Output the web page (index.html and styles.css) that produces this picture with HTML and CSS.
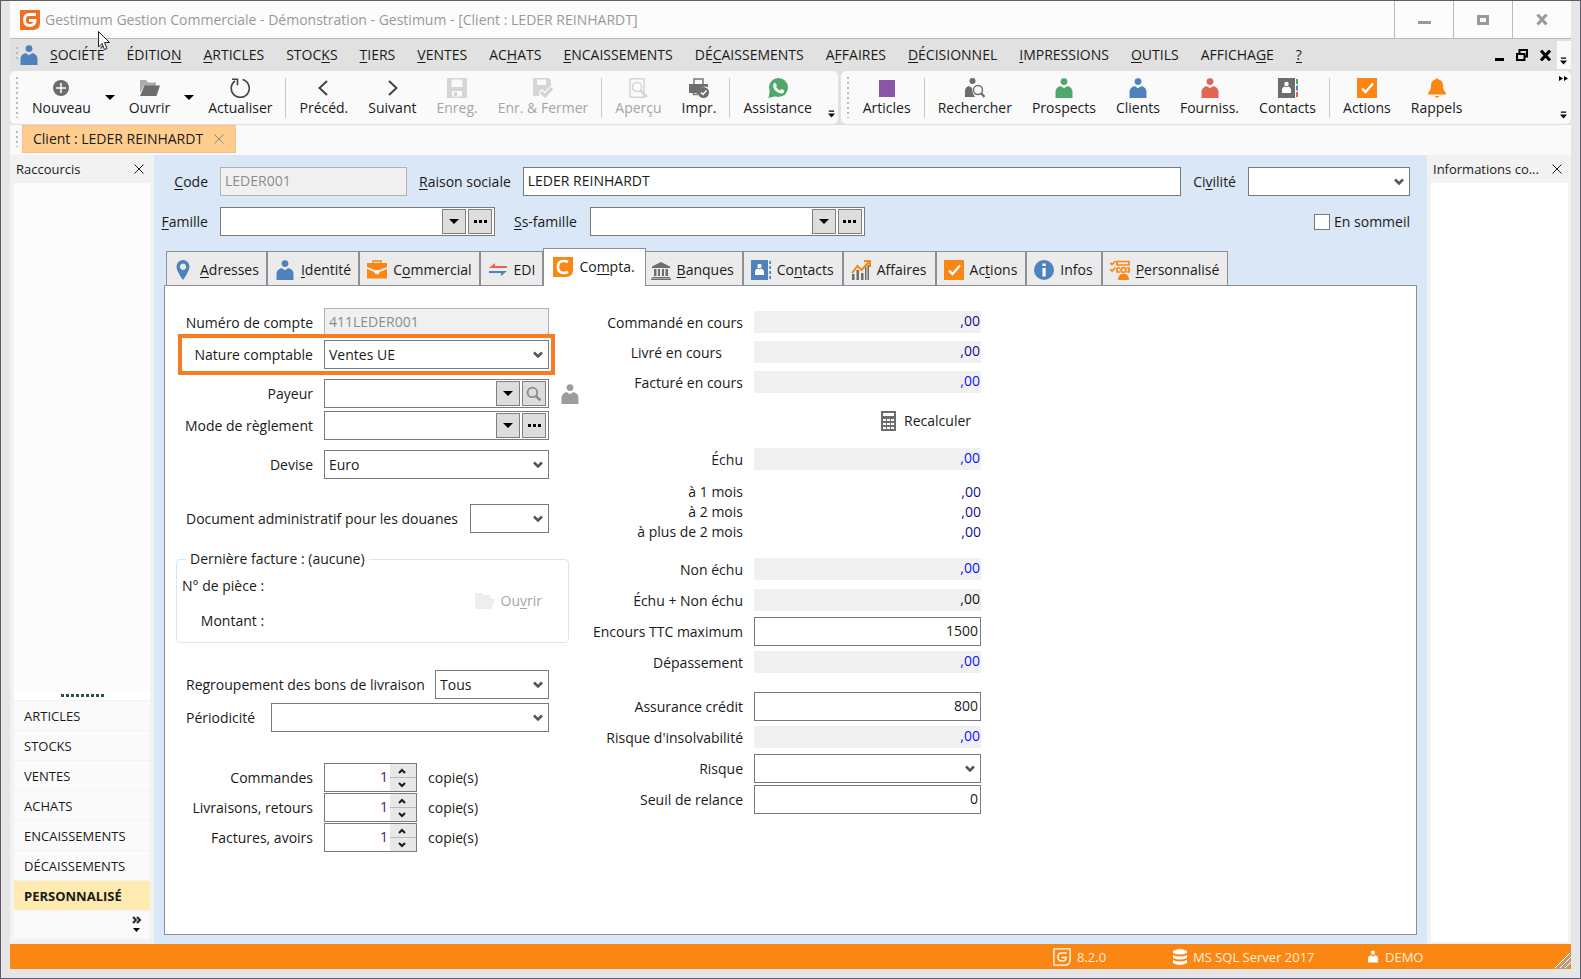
FILE: index.html
```
<!DOCTYPE html>
<html lang="fr">
<head>
  <meta charset="UTF-8">
  <title>Gestimum Gestion Commerciale</title>
  <link rel="stylesheet" href="styles.css">
</head>
<body>

<svg class="sprite" aria-hidden="true">
  <symbol id="i-person" viewBox="0 0 20 20"><circle cx="10" cy="3.6" r="3.4"/><path d="M1.5 20v-6q0-4.500 5-6l3.500 2.200L13.500 8q5 1.500 5 6v6z"/></symbol>
  <symbol id="i-check" viewBox="0 0 20 20"><path fill="#fa8614" d="M0 0h20v20H0z"/><path fill="none" stroke="#fff" stroke-width="2.400" d="M5 10.500l3.500 3.500L16 5.500"/></symbol>
  <symbol id="i-folder" viewBox="0 0 20 20"><path opacity=".55" d="M0 15V2h6l2 2.500h8V8H4z"/><path d="M4.500 7.500H20L16.500 18H0z"/></symbol>
  <symbol id="i-save" viewBox="0 0 20 20"><path fill-rule="evenodd" d="M0 0h20v20H0zM4.500 1.500V9h11V1.500zM5 13v5.500h10V13z"/><path d="M7 14h3v4H7z"/></symbol>
  <symbol id="i-glass" viewBox="0 0 20 20"><circle cx="8" cy="8" r="6" fill="none" stroke="currentColor" stroke-width="2.200"/><path fill="none" stroke="currentColor" stroke-width="3" d="M12 12l6 6"/></symbol>
  <symbol id="i-x" viewBox="0 0 10 10"><path fill="none" stroke="currentColor" d="M.5.5l9 9M9.500.5l-9 9"/></symbol>
  <symbol id="i-more" viewBox="0 0 8 8"><path d="M1 0h6v1.500H1zM0 3.500h8L4 8z"/></symbol>
  <symbol id="i-up" viewBox="0 0 8 6"><path fill="none" stroke="currentColor" stroke-width="2" d="M1 5l3-3 3 3"/></symbol>
  <symbol id="i-down" viewBox="0 0 8 6"><path fill="none" stroke="currentColor" stroke-width="2" d="M1 1l3 3 3-3"/></symbol>
</svg>

<div class="window">
  <header class="titlebar">
    <svg class="logo" viewBox="0 0 20 20"><path fill="#f26f21" d="M0 0h20v13q0 7-7 7H0z"/><path fill="none" stroke="#fff" stroke-width="2.800" d="M16 4.500H9.500q-5 0-5 5.500t5 5.500q5.500 0 5.500-5H9"/></svg>
    <h1>Gestimum Gestion Commerciale - Démonstration - Gestimum - [Client : LEDER REINHARDT]</h1>
    <div class="win-buttons">
      <button aria-label="Réduire"><svg width="13" height="12"><path fill="#999" d="M0 8h13v3H0z"/></svg></button>
      <button aria-label="Agrandir"><svg width="12" height="10"><path fill="none" stroke="#999" stroke-width="3" d="M1.500 1.500h9v7h-9z"/></svg></button>
      <button aria-label="Fermer"><svg width="12" height="11"><path fill="none" stroke="#999" stroke-width="3" d="M1.500.5l9 10M10.500.5l-9 10"/></svg></button>
    </div>
  </header>

  <nav class="menubar">
    <span class="grip"></span>
    <svg class="icon blue"><use href="#i-person"/></svg>
    <button><u>S</u>OCIÉTÉ</button>
    <button>ÉDITIO<u>N</u></button>
    <button><u>A</u>RTICLES</button>
    <button>STOC<u>K</u>S</button>
    <button><u>T</u>IERS</button>
    <button><u>V</u>ENTES</button>
    <button>AC<u>H</u>ATS</button>
    <button><u>E</u>NCAISSEMENTS</button>
    <button>DÉ<u>C</u>AISSEMENTS</button>
    <button>A<u>F</u>FAIRES</button>
    <button><u>D</u>ÉCISIONNEL</button>
    <button><u>I</u>MPRESSIONS</button>
    <button><u>O</u>UTILS</button>
    <button>AFFICHA<u>G</u>E</button>
    <button><u>?</u></button>
    <div class="mdi-buttons">
      <svg width="9" height="11"><path d="M0 8h9v3H0z"/></svg>
      <svg width="12" height="12"><path fill="none" stroke="#000" stroke-width="2" d="M3.500 4V1H11v6.500H8.500M1 5h7.500v6H1z"/></svg>
      <svg width="11" height="11"><path fill="none" stroke="#000" stroke-width="3" d="M1 0.500l9 10M10 0.500l-9 10"/></svg>
    </div>
    <span class="menu-more"><svg width="7" height="8"><use href="#i-more"/></svg></span>
  </nav>

  <div class="toolbars">
    <div class="toolbar">
      <span class="grip"></span>
      <button><svg class="icon gray" viewBox="0 0 20 20"><circle cx="10" cy="10" r="8"/><path fill="none" stroke="#fff" stroke-width="1.500" d="M10 5v10M5 10h10"/></svg>Nouveau</button>
      <button class="drop" aria-label="Choix"></button>
      <button><svg class="icon gray"><use href="#i-folder"/></svg>Ouvrir</button>
      <button class="drop" aria-label="Choix"></button>
      <button><svg class="icon" viewBox="0 0 20 20"><path fill="none" stroke="#444" stroke-width="1.600" d="M12.500 1.600A9 9 0 1 1 5 3M2 1.200h5.500v6"/></svg>Actualiser</button>
      <i class="sep"></i>
      <button><svg class="icon" viewBox="0 0 20 20"><path fill="none" stroke="#444" stroke-width="2" d="M13 3L5.500 10l7.500 7"/></svg>Précéd.</button>
      <button><svg class="icon" viewBox="0 0 20 20"><path fill="none" stroke="#444" stroke-width="2" d="M7 3l7.500 7L7 17"/></svg>Suivant</button>
      <button disabled><svg class="icon pale"><use href="#i-save"/></svg>Enreg.</button>
      <button disabled><svg class="icon pale" viewBox="0 0 20 20"><path fill-rule="evenodd" d="M0 0h16l2 2v9l-6 6-4-3-2 4H0zM4 1.500V7h9V1.500z"/><path fill="none" stroke="#fafafa" stroke-width="5" d="M7 13l5 4 8-8"/><path fill="none" stroke="#d2d2d2" stroke-width="3" d="M8 14l4 4 7-8"/></svg>Enr. &amp; Fermer</button>
      <i class="sep"></i>
      <button disabled><svg class="icon pale" viewBox="0 0 20 20"><path fill="none" stroke="#d5d5d5" stroke-width="1.500" d="M2 .8h14v18.400H2z"/><circle cx="9" cy="9" r="4.500" fill="#fff" stroke="#d5d5d5" stroke-width="1.500"/><path fill="none" stroke="#d5d5d5" stroke-width="2.500" d="M12 12l7 7"/></svg>Aperçu</button>
      <button><svg class="icon gray" viewBox="0 0 20 20"><path fill="none" stroke="#777" stroke-width="1.500" d="M5 6V1h9v5M3.500 10.500h5v6h-4z"/><path d="M0 6h19v3q-8-2-9 6H0z"/><circle cx="14.500" cy="14.500" r="5.500"/><path fill="none" stroke="#fff" stroke-width="1.500" d="M12 14.500l2 2 3.500-4"/></svg>Impr.</button>
      <i class="sep"></i>
      <button><svg class="icon green" viewBox="0 0 20 20"><circle cx="10.500" cy="9.500" r="9.500"/><path d="M2 12l-1.500 8 8-2z"/><path fill="#fff" d="M7 4.500l2 3-1 1.500q1.500 2.500 4 3.500l1.500-1.500 2.700 1.500q0 3-3 3Q6.500 14.500 5 8q0-3 2-3.500z"/></svg>Assistance</button>
      <svg class="bar-more" width="7" height="8"><use href="#i-more"/></svg>
    </div>
    <div class="toolbar toolbar-wide">
      <span class="grip"></span>
      <button><svg class="icon" viewBox="0 0 20 20"><path fill="#8b56a8" d="M2 2h16v17H2z"/></svg>Articles</button>
      <i class="sep"></i>
      <button><svg class="icon gray" viewBox="0 0 20 20"><circle cx="7.500" cy="3" r="3"/><path d="M0 19v-6q0-4 4-5l3 2q0 5 3 9z"/><circle cx="13" cy="12" r="4.500" fill="#fafafa" stroke="#6d6d6d" stroke-width="1.400"/><path fill="none" stroke="#6d6d6d" stroke-width="2.400" d="M16 15l3.500 4"/></svg>Rechercher</button>
      <button><svg class="icon green"><use href="#i-person"/></svg>Prospects</button>
      <button><svg class="icon blue"><use href="#i-person"/></svg>Clients</button>
      <button><svg class="icon red"><use href="#i-person"/></svg>Fourniss.</button>
      <button><svg class="icon gray" viewBox="0 0 20 20"><path d="M0 0h17v20H0z"/><circle cx="8.500" cy="6" r="2.200" fill="#fff"/><path fill="#fff" d="M4 15v-3q0-3 3-3.500l1.500 1 1.500-1q3 .5 3 3.500v3z"/><path fill="#4ea86a" d="M18 1h2v5h-2z"/><path fill="#4f81bd" d="M18 7.500h2v5h-2z"/><path fill="#e06552" d="M18 14h2v5h-2z"/></svg>Contacts</button>
      <i class="sep"></i>
      <button><svg class="icon"><use href="#i-check"/></svg>Actions</button>
      <button><svg class="icon orange" viewBox="0 0 20 20"><path d="M1 16.500v-1.500q3-2.500 3-7.500 0-5 4.500-6 1.500-2.500 3 0Q16 2.500 16 7.500q0 5 3 7.500v1.500zM7.500 18h5l-2.500 2z"/></svg>Rappels</button>
      <div class="bar-end">
        <svg width="9" height="5"><path d="M0 0l4 2.500-4 2.500zM5 0l4 2.500-4 2.500z"/></svg>
        <svg width="7" height="8"><use href="#i-more"/></svg>
      </div>
    </div>
  </div>

  <div class="docbar">
    <span class="grip"></span>
    <button class="doc-tab">Client : LEDER REINHARDT <svg width="10" height="10"><use href="#i-x"/></svg></button>
  </div>

  <div class="workspace">
    <aside class="dock dock-left">
      <div class="dock-head"><span>Raccourcis</span><svg width="10" height="10"><use href="#i-x"/></svg></div>
      <div class="dock-body"></div>
      <div class="splitter"><i></i></div>
      <button>ARTICLES</button>
      <button>STOCKS</button>
      <button>VENTES</button>
      <button>ACHATS</button>
      <button>ENCAISSEMENTS</button>
      <button>DÉCAISSEMENTS</button>
      <button class="current">PERSONNALISÉ</button>
      <div class="dock-more"><svg width="10" height="17"><path fill="none" stroke="#223" stroke-width="2" d="M1 1l3 3-3 3M5 1l3 3-3 3"/><path d="M1 12h7l-3.500 4z"/></svg></div>
    </aside>

    <main class="client">
      <div class="head-row">
        <label class="first" for="code"><u>C</u>ode</label>
        <input class="code" id="code" value="LEDER001" disabled>
        <label for="raison"><u>R</u>aison sociale</label>
        <input class="grow" id="raison" value="LEDER REINHARDT">
        <label for="civilite">Ci<u>v</u>ilité</label>
        <select class="civilite" id="civilite"><option></option></select>
      </div>
      <div class="head-row">
        <label class="first" for="famille"><u>F</u>amille</label>
        <div class="combo combo-lg"><input id="famille"><button class="arrow" aria-label="Liste"></button><button class="dots" aria-label="Détail"><i></i></button></div>
        <label class="ssfam" for="ssfamille"><u>S</u>s-famille</label>
        <div class="combo combo-lg"><input id="ssfamille"><button class="arrow" aria-label="Liste"></button><button class="dots" aria-label="Détail"><i></i></button></div>
        <label class="check"><input type="checkbox">En sommeil</label>
      </div>

      <div class="tabs">
        <button><svg class="icon blue" viewBox="0 0 20 20"><path fill-rule="evenodd" d="M9 0a6.500 6.500 0 0 1 6.500 6.500Q15.500 11 9 20 2.500 11 2.500 6.500A6.500 6.500 0 0 1 9 0zm0 3.500a3.200 3.200 0 1 0 .1 0z"/></svg><span><u>A</u>dresses</span></button>
        <button><svg class="icon blue"><use href="#i-person"/></svg><span><u>I</u>dentité</span></button>
        <button><svg class="icon orange" viewBox="0 0 20 20"><path d="M0 3h20v4l-8 3H8L0 7zM0 9l7 3q1 2.500 3 2.500T13 12l7-3v9.500H0z"/><path fill="none" stroke="#fa8614" stroke-width="1.500" d="M6 3V1h8v2"/></svg><span>C<u>o</u>mmercial</span></button>
        <button><svg class="icon" viewBox="0 0 20 20"><path fill="#e06552" d="M1 8l6-5v3h12v2z"/><path fill="#4f81bd" d="M19 11l-6 5v-3H1v-2z"/></svg><span>EDI</span></button>
        <button class="active"><svg class="icon" viewBox="0 0 20 20"><path fill="#fa8614" d="M0 0h20v13q0 7-7 7H0z"/><path fill="none" stroke="#fff" stroke-width="2.600" d="M15 5q-2-1-4.500-1Q5 4 5 10t5.500 6q2.500 0 4.500-1"/></svg><span>Co<u>m</u>pta.</span></button>
        <button><svg class="icon gray" viewBox="0 0 20 20"><path d="M1 6.500L10 2l9 4.500V8H1zM3 9h2.500v7H3zM7 9h2v7H7zM11 9h2v7h-2zM14.500 9H17v7h-2.500zM1 17h18v1H1zM0 18.500h20V20H0z"/></svg><span><u>B</u>anques</span></button>
        <button><svg class="icon blue" viewBox="0 0 20 20"><path d="M0 0h17v20H0zM18.300 1H20v3h-1.700zM18.300 6H20v3h-1.700zM18.300 11H20v3h-1.700zM18.300 16H20v3h-1.700z"/><circle cx="8.500" cy="6" r="2.200" fill="#fff"/><path fill="#fff" d="M4 15v-3q0-3 3-3.500l1.500 1 1.500-1q3 .5 3 3.500v3z"/></svg><span>Co<u>n</u>tacts</span></button>
        <button><svg class="icon gray" viewBox="0 0 20 20"><path d="M1 14h2.500v6H1zM5.500 10H8v10H5.500zM10 13h2.500v7H10zM14 7h1.500v13H14zM16.500 5H18v15h-1.500z"/><path fill="none" stroke="#fa8614" stroke-width="2" d="M1 13l5.500-7 4 4L18 2M13 1h6v6"/></svg><span>Affaires</span></button>
        <button><svg class="icon"><use href="#i-check"/></svg><span>Ac<u>t</u>ions</span></button>
        <button><svg class="icon blue" viewBox="0 0 20 20"><circle cx="10" cy="10" r="10"/><path fill="#fff" d="M8.500 3.500h3.200V6H8.500zM8.500 8h3.200v8.500H8.500z"/></svg><span>Infos</span></button>
        <button><svg class="icon orange" viewBox="0 0 20 20"><path fill="none" stroke="#fa8614" stroke-width="1.700" d="M0 2.500l2 2L5.500 1M0 9l2 2 3.500-3.500M7 1.500h12v3.500H7zM7 8h3M7 8v4h3M17 8h2v4h-2"/><circle cx="13.500" cy="10" r="2.400" fill="none" stroke="#fa8614" stroke-width="1.700"/><path d="M8 20q0-4 3-6h5q3 2 3 6z"/></svg><span><u>P</u>ersonnalisé</span></button>
      </div>

      <section class="page">
        <div class="col-left">
          <div class="row"><label for="compte">Numéro de compte</label><input id="compte" value="411LEDER001" disabled></div>
          <div class="row highlight"><label for="nature">Nature comptable</label><select id="nature"><option>Ventes UE</option></select></div>
          <div class="row spaced"><label for="payeur">Payeur</label><div class="combo"><input id="payeur"><button class="arrow" aria-label="Liste"></button><button class="dots" aria-label="Chercher"><svg width="16" height="16"><use href="#i-glass"/></svg></button></div><svg class="icon silver"><use href="#i-person"/></svg></div>
          <div class="row"><label for="mode">Mode de règlement</label><div class="combo"><input id="mode"><button class="arrow" aria-label="Liste"></button><button class="dots" aria-label="Détail"><i></i></button></div></div>
          <div class="row spaced"><label for="devise">Devise</label><select id="devise"><option>Euro</option></select></div>
          <div class="line apart"><label for="douanes">Document administratif pour les douanes</label><select class="w-s" id="douanes"><option></option></select></div>

          <fieldset>
            <legend>Dernière facture : (aucune)</legend>
            <div class="invoice">
              <p>N° de pièce :</p>
              <p>Montant :</p>
            </div>
            <button class="open" disabled><svg class="icon" viewBox="0 0 20 20"><path fill="#eee" d="M0 2h6l2 2h7l1 4h4l-4 10H0z"/></svg><span>Ou<u>v</u>rir</span></button>
          </fieldset>

          <div class="line apart"><label for="regroup">Regroupement des bons de livraison</label><select class="w-m" id="regroup"><option>Tous</option></select></div>
          <div class="line"><label for="period">Périodicité</label><select class="w-l" id="period"><option></option></select></div>

          <div class="copies">
            <div class="row"><label for="c1">Commandes</label><div class="spin"><input id="c1" value="1"><div><button aria-label="Plus"><svg width="8" height="6"><use href="#i-up"/></svg></button><button aria-label="Moins"><svg width="8" height="6"><use href="#i-down"/></svg></button></div></div><span>copie(s)</span></div>
            <div class="row"><label for="c2">Livraisons, retours</label><div class="spin"><input id="c2" value="1"><div><button aria-label="Plus"><svg width="8" height="6"><use href="#i-up"/></svg></button><button aria-label="Moins"><svg width="8" height="6"><use href="#i-down"/></svg></button></div></div><span>copie(s)</span></div>
            <div class="row"><label for="c3">Factures, avoirs</label><div class="spin"><input id="c3" value="1"><div><button aria-label="Plus"><svg width="8" height="6"><use href="#i-up"/></svg></button><button aria-label="Moins"><svg width="8" height="6"><use href="#i-down"/></svg></button></div></div><span>copie(s)</span></div>
          </div>
        </div>

        <div class="col-right">
          <div class="group tight">
            <div class="sum"><span>Commandé en cours</span><output class="navy">,00</output></div>
            <div class="sum"><span class="indent">Livré en cours</span><output class="navy">,00</output></div>
            <div class="sum"><span>Facturé en cours</span><output>,00</output></div>
          </div>
          <button class="recalc"><svg width="15" height="20"><path fill="#6d6d6d" d="M0 0h15v20H0z"/><path fill="#fff" d="M2 2h11v3H2zM2 8h3v2H2zM6 8h3v2H6zM10 8h3v2h-3zM2 12h3v2H2zM6 12h3v2H6zM10 12h3v2h-3zM2 16h3v2H2zM6 16h3v2H6zM10 16h3v2h-3z"/></svg>Recalculer</button>
          <div class="sum"><span>Échu</span><output>,00</output></div>
          <div class="months">
            <div class="sum"><span>à 1 mois</span><output class="navy">,00</output></div>
            <div class="sum"><span>à 2 mois</span><output class="navy">,00</output></div>
            <div class="sum"><span>à plus de 2 mois</span><output class="navy">,00</output></div>
          </div>
          <div class="group">
            <div class="sum"><span>Non échu</span><output>,00</output></div>
            <div class="sum"><span>Échu + Non échu</span><output class="black">,00</output></div>
            <div class="sum"><label for="encours">Encours TTC maximum</label><input id="encours" value="1500"></div>
            <div class="sum"><span>Dépassement</span><output>,00</output></div>
          </div>
          <div class="group">
            <div class="sum"><label for="assurance">Assurance crédit</label><input id="assurance" value="800"></div>
            <div class="sum"><span>Risque d'insolvabilité</span><output>,00</output></div>
            <div class="sum"><label for="risque">Risque</label><select id="risque"><option></option></select></div>
            <div class="sum"><label for="seuil">Seuil de relance</label><input id="seuil" value="0"></div>
          </div>
        </div>
      </section>
    </main>

    <aside class="dock dock-right">
      <div class="dock-head"><span>Informations co...</span><svg width="10" height="10"><use href="#i-x"/></svg></div>
      <div class="dock-body"></div>
    </aside>
  </div>

  <footer class="statusbar">
    <span><svg width="18" height="18" viewBox="0 0 20 20"><path fill="none" stroke="#fff" stroke-width="1.400" d="M1 1h18v12q0 6-6 6H1z"/><path fill="none" stroke="#fff" stroke-width="1.600" d="M15 5.500h-5q-4.500 0-4.500 4.500t4.500 4.500q4.500 0 4.500-4h-5"/></svg>8.2.0</span>
    <span><svg width="14" height="16" viewBox="0 0 14 16"><path fill="#fff" d="M0 2q7-4 14 0v2q-7 3-14 0zM0 6q7 3 14 0v3q-7 3-14 0zM0 11q7 3 14 0v3q-7 4-14 0z"/></svg>MS SQL Server 2017</span>
    <span><svg width="12" height="13" fill="#fff"><use href="#i-person"/></svg>DEMO</span>
    <svg class="size-grip" width="16" height="16"><path fill="none" stroke="#a5a5a5" stroke-width="2" d="M1 16L16 1M6 16L16 6M11 16l5-5"/><path fill="none" stroke="#fff" d="M0 15L15 0M5 15L16 4M10 15l6-6"/></svg>
  </footer>
</div>

<svg class="cursor" width="13" height="20"><path fill="#fff" stroke="#222" d="M.5.5v15.500l3.500-3.500 2.500 6 2.500-1-2.500-6h5z"/></svg>

</body>
</html>
```
FILE: styles.css
```
* {
  box-sizing: border-box;
}
body {
  margin: 0;
  font-family: "Open Sans", "Noto Sans", sans-serif;
  font-size: 14px;
  line-height: 20px;
  color: #1a1a1a;
}
button, input, select {
  font: inherit;
  color: inherit;
}
button {
  background: none;
  border: none;
  padding: 0;
  white-space: nowrap;
}
label, p, legend {
  white-space: nowrap;
}
u {
  text-underline-offset: 2px;
}
.sprite {
  position: absolute;
  width: 0;
  height: 0;
}
.window {
  display: flex;
  flex-direction: column;
  min-height: 100vh;
  background: #e6e6e6;
  border: 1px solid #5e5c68;
  padding: 0 9px 9px;
}

/* icons */
.icon {
  width: 20px;
  height: 20px;
  flex: none;
}
.blue { fill: #4f81bd; }
.green { fill: #4ea86a; }
.red { fill: #e06552; }
.orange { fill: #fa8614; }
.gray { fill: #6d6d6d; }
.silver { fill: #9d9d9d; }
.pale { fill: #d5d5d5; }

/* title bar */
.titlebar {
  display: flex;
  align-items: center;
  height: 38px;
  padding-left: 10px;
  background: #fcfcfc;
  border-bottom: 1px solid #bababa;
}
.logo {
  width: 20px;
  height: 20px;
}
.titlebar h1 {
  margin: 0 0 0 5px;
  font-size: 14px;
  font-weight: normal;
  color: #999;
}
.win-buttons {
  display: flex;
  align-self: stretch;
  margin-left: auto;
}
.win-buttons button {
  width: 59px;
  border-left: 1px solid #bababa;
}

/* menu */
.menubar {
  display: flex;
  align-items: center;
  height: 32px;
  padding-left: 6px;
  background: #e1e1e1;
}
.grip {
  width: 2px;
  align-self: stretch;
  margin: 6px 0;
  background: repeating-linear-gradient(#bbb 0 2px, transparent 2px 5px);
}
.menubar .grip {
  margin: 8px 0 12px;
}
.menubar .icon {
  margin: 0 0 0 1px;
}
.menubar button {
  padding: 0 11px;
}
.mdi-buttons {
  display: flex;
  align-items: center;
  gap: 12px;
  margin-left: auto;
  margin-right: 6px;
}
.menu-more {
  display: flex;
  align-items: flex-end;
  width: 14px;
  height: 28px;
  padding: 4px 3px;
  background: #fafafa;
}

/* tool bars */
.toolbars {
  display: flex;
  gap: 3px;
  height: 53px;
  background: #e1e1e1;
}
.toolbar {
  display: flex;
  align-items: center;
  padding-left: 6px;
  background: #fafafa;
  border-radius: 5px;
}
.toolbar-wide {
  flex: 1;
}
.toolbar .grip {
  margin-right: 4px;
}
.toolbar button {
  display: flex;
  flex-direction: column;
  align-items: center;
  padding: 0 10px;
}
.toolbar button:disabled {
  color: #a5a5a5;
}
.toolbar .drop {
  width: 18px;
  padding: 0;
}
.drop::before {
  content: "";
  border: 5px solid transparent;
  border-top-color: #000;
  border-bottom: none;
}
.sep {
  width: 1px;
  height: 40px;
  margin: 0 3px;
  background: #c8c8c8;
}
.bar-more {
  align-self: flex-end;
  margin: 0 3px 6px 6px;
}
.bar-end {
  display: flex;
  flex-direction: column;
  justify-content: space-between;
  align-items: center;
  align-self: stretch;
  margin: 0 3px 0 auto;
  padding: 5px 0;
}

/* open documents */
.docbar {
  display: flex;
  align-items: center;
  height: 31px;
  padding: 0 0 2px 6px;
  background: #fafafa;
  border-top: 1px solid #e1e1e1;
}
.doc-tab {
  display: flex;
  align-items: center;
  gap: 11px;
  height: 28px;
  margin-left: 4px;
  padding: 0 11px 0 10px;
  background: #ffce8e;
  border: 1px solid #ffbb90;
}
.doc-tab svg {
  color: #888;
}

/* side panels */
.workspace {
  display: flex;
  flex: 1;
}
.dock {
  display: flex;
  flex-direction: column;
  width: 144px;
  background: #f2f2f2;
}
.dock-left {
  padding: 0 4px;
}
.dock-right {
  padding: 0 3px 2px 4px;
}
.dock-head {
  display: flex;
  align-items: center;
  justify-content: space-between;
  height: 28px;
  padding: 0 6px 0 2px;
  font-size: 13px;
}
.dock-body {
  flex: 1;
  background: #fff;
}
.dock-left .dock-body {
  background: #fcfcfc;
}
.splitter {
  display: flex;
  align-items: center;
  justify-content: center;
  height: 9px;
  background: #fff;
}
.splitter i {
  width: 43px;
  height: 3px;
  background: repeating-linear-gradient(90deg, #2f4f4f 0 3px, transparent 3px 5px);
}
.dock button {
  height: 29px;
  margin-top: 1px;
  padding-left: 10px;
  text-align: left;
  font-size: 13px;
  background: #fafafa;
}
.dock .current {
  background: #ffebaf;
  font-weight: bold;
}
.dock-more {
  display: flex;
  justify-content: flex-end;
  height: 28px;
  margin: 1px 0 5px;
  padding: 5px 8px;
  background: #fafafa;
}

/* client card */
.client {
  display: flex;
  flex-direction: column;
  flex: 1;
  padding: 12px 10px 9px;
  background: #dae7f6;
}
.head-row {
  display: flex;
  align-items: center;
  gap: 12px;
  height: 29px;
  margin: 0 7px 11px -3px;
}
.head-row .first {
  width: 47px;
  text-align: right;
}
input, select {
  width: 225px;
  height: 29px;
  padding: 0 2px 2px 4px;
  background: #fff;
  border: 1px solid #7a7a7a;
  border-radius: 0;
}
input:disabled {
  background: #f0f0f0;
  border-color: #b2b2b2;
  color: #8c8c8c;
}
select {
  appearance: none;
  padding-bottom: 0;
  background: #fff url("data:image/svg+xml,%3Csvg xmlns='http://www.w3.org/2000/svg' width='10' height='8'%3E%3Cpath d='M1 1.500l4 4 4-4' fill='none' stroke='%23555' stroke-width='2.500'/%3E%3C/svg%3E") no-repeat right 5px center;
}
.head-row .code {
  width: 187px;
}
.head-row .grow {
  flex: 1;
  min-width: 0;
}
.head-row .civilite {
  width: 162px;
}
.ssfam {
  margin: 0 1px 0 7px;
}
.check {
  display: flex;
  align-items: center;
  gap: 4px;
  margin-left: auto;
}
.check input {
  appearance: none;
  width: 16px;
  height: 16px;
  margin: 0;
  padding: 0;
}
.combo {
  display: flex;
  gap: 2px;
  width: 225px;
  height: 29px;
  padding: 1px 2px 1px 1px;
  background: #fff;
  border: 1px solid #7a7a7a;
}
.combo-lg {
  width: 275px;
}
.combo input {
  flex: 1;
  min-width: 0;
  height: auto;
  border: none;
}
.combo button {
  display: flex;
  align-items: center;
  justify-content: center;
  width: 24px;
  background: #ddd;
  border: 1px solid #808080;
}
.arrow::before {
  content: "";
  border: 5px solid transparent;
  border-top-color: #000;
  border-bottom: none;
}
.dots i {
  width: 13px;
  height: 3px;
  background: repeating-linear-gradient(90deg, #000 0 3px, transparent 3px 5px);
}
.dots svg {
  color: #888;
}

/* tabs */
.tabs {
  display: flex;
  align-items: flex-end;
  margin-top: 1px;
  padding-left: 2px;
}
.tabs button {
  display: flex;
  align-items: center;
  gap: 6px;
  height: 34px;
  padding: 2px 7px 0;
  background: #ebebeb;
  border: 1px solid #8e8e98;
  border-bottom: none;
}
.tabs button:nth-child(n+6) {
  padding: 2px 8px 0 7px;
}
.tabs .active {
  z-index: 1;
  height: 38px;
  margin: 0 -3px -1px 0;
  padding: 0 10px 2px 9px;
  background: #fff;
}
.page {
  display: flex;
  flex: 1;
  align-items: flex-start;
  padding: 22px 19px;
  background: #fff;
  border: 1px solid #8e8e98;
}

/* left column */
.col-left {
  width: 365px;
}
.row {
  display: grid;
  grid-template-columns: 129px auto auto;
  align-items: center;
  column-gap: 11px;
  width: max-content;
  margin-bottom: 3px;
}
.row label {
  justify-self: end;
}
.highlight {
  grid-template-columns: 129px auto;
  outline: 4px solid #f77b20;
  outline-offset: 2px;
}
.spaced {
  margin-top: 10px;
}
.line {
  display: flex;
  align-items: center;
  justify-content: space-between;
  margin-bottom: 4px;
  padding-left: 2px;
}
.apart {
  margin-top: 25px;
}
.w-s { width: 79px; }
.w-m { width: 114px; }
.w-l { width: 278px; }
fieldset {
  display: flex;
  justify-content: space-between;
  margin: 16px -20px 27px -8px;
  padding: 0 26px 7px 5px;
  border: 1px solid #dbe5ee;
  border-radius: 4px;
}
legend {
  margin-left: 4px;
  padding: 0 4px;
}
.invoice {
  text-align: right;
}
.invoice p {
  margin: 7px 0 15px;
}
.invoice p + p {
  margin-bottom: 4px;
}
.open {
  display: flex;
  align-items: center;
  align-self: center;
  gap: 6px;
  padding-bottom: 3px;
  color: #a5a5a5;
}
.copies {
  margin-top: 31px;
}
.copies .row {
  margin-bottom: 1px;
}
.spin {
  display: flex;
  width: 93px;
  height: 29px;
  border: 1px solid #7a7a7a;
}
.spin input {
  width: 65px;
  height: auto;
  border: none;
  text-align: right;
  color: #427;
}
.spin div {
  display: flex;
  flex-direction: column;
  flex: 1;
}
.spin button {
  display: flex;
  align-items: center;
  justify-content: center;
  flex: 1;
  padding-right: 3px;
  background: #e8e8e8;
}
.spin button + button {
  border-top: 1px solid #b8b8c8;
}

/* right column */
.col-right {
  display: flex;
  flex-direction: column;
  align-items: flex-end;
  width: 432px;
}
.sum {
  display: grid;
  grid-template-columns: auto 227px;
  justify-content: end;
  align-items: center;
  column-gap: 11px;
}
.group .sum {
  height: 31px;
}
.tight .sum {
  height: 30px;
}
.sum input, .sum select {
  width: 227px;
}
.sum input {
  text-align: right;
}
.sum output {
  height: 22px;
  margin-bottom: 2px;
  padding-right: 1px;
  text-align: right;
  background: #f0f0f0;
  color: #11f;
}
.sum .navy {
  color: #118;
}
.sum .black {
  color: #111;
}
.indent {
  margin-right: 21px;
}
.recalc {
  display: flex;
  align-items: center;
  gap: 8px;
  margin: 13px 10px 17px 0;
}
.months {
  margin: 10px 0 12px;
}
.months .sum output {
  height: 20px;
  margin: 0;
  padding: 0;
  background: none;
}
.group + .group {
  margin-top: 13px;
}

/* status bar */
.statusbar {
  display: grid;
  grid-template-columns: 120px 194px 188px 16px;
  justify-content: end;
  align-items: center;
  height: 25px;
  background: #fa8614;
  color: #fff0dc;
  font-size: 13px;
}
.statusbar span {
  display: flex;
  align-items: center;
  gap: 6px;
}
.size-grip {
  align-self: end;
}

/* mouse pointer above the menu */
.cursor {
  position: absolute;
  left: 98px;
  top: 31px;
}
```
